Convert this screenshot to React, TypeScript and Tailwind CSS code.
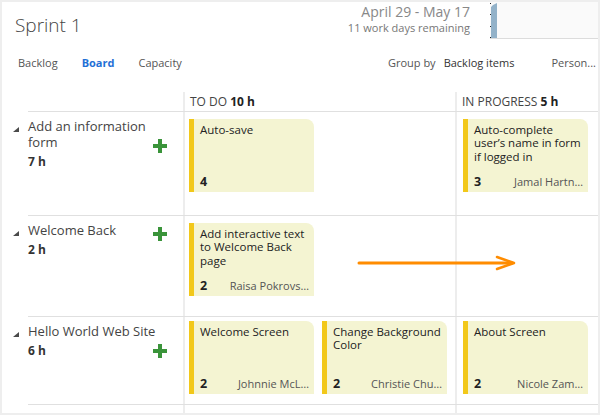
import React from "react";

type CardData = { title: string; n: string; name: string };

type RowData = {
  title: string;
  hours: string;
  height: string;
  cardTop: string;
  todo: CardData[];
  inProgress: CardData[];
};

const rows: RowData[] = [
  {
    title: "Add an information form",
    hours: "7 h",
    height: "h-[104px]",
    cardTop: "pt-[7px]",
    todo: [{ title: "Auto-save", n: "4", name: "" }],
    inProgress: [
      { title: "Auto-complete user’s name in form if logged in", n: "3", name: "Jamal Hartn…" },
    ],
  },
  {
    title: "Welcome Back",
    hours: "2 h",
    height: "h-[101px]",
    cardTop: "pt-[7px]",
    todo: [{ title: "Add interactive text to Welcome Back page", n: "2", name: "Raisa Pokrovs…" }],
    inProgress: [],
  },
  {
    title: "Hello World Web Site",
    hours: "6 h",
    height: "h-[88px]",
    cardTop: "pt-[4px]",
    todo: [
      { title: "Welcome Screen", n: "2", name: "Johnnie McL…" },
      { title: "Change Background Color", n: "2", name: "Christie Chu…" },
    ],
    inProgress: [{ title: "About Screen", n: "2", name: "Nicole Zam…" }],
  },
];

function Plus() {
  return (
    <svg width="14" height="14" viewBox="0 0 14 14" className="float-right mt-[5px]">
      <rect x="0" y="5" width="14" height="4" fill="#3a943a" />
      <rect x="5" y="0" width="4" height="14" fill="#3a943a" />
    </svg>
  );
}

function Triangle() {
  return (
    <svg width="6" height="5" viewBox="0 0 6 5">
      <polygon points="6,0 6,5 0,5" fill="#4a4a4a" />
    </svg>
  );
}

function Card({ card }: { card: CardData }) {
  return (
    <div className="flex w-[125px] h-[73px] shrink-0">
      <div className="w-[5px] bg-[#f2c81a]" />
      <div className="flex-1 flex flex-col bg-[#f4f4d2] rounded-tr-[8px] pl-[6px] pr-[5px] pt-[4px] pb-[3px]">
        <div className="text-[11.5px] leading-[13.3px] text-[#222]">{card.title}</div>
        <div className="mt-auto flex items-baseline justify-between">
          <span className="text-[12.5px] leading-[14px] font-bold text-[#222]">{card.n}</span>
          <span className="text-[11px] leading-[14px] text-[#555]">{card.name}</span>
        </div>
      </div>
    </div>
  );
}

function Burndown() {
  return (
    <div className="w-[108px] h-[37px] shrink-0 bg-[#fafafa] border-b border-[#dcdcdc]">
      <svg width="108" height="37" viewBox="0 0 108 37">
        <rect x="0" y="1" width="1" height="1" fill="#222" />
        <rect x="0" y="12" width="1" height="1" fill="#222" />
        <rect x="0" y="24" width="1" height="1" fill="#222" />
        <rect x="0" y="35" width="1" height="1" fill="#222" />
        <polygon points="1,5 3,3 7,1 7,36 1,36" fill="#93b2c9" />
      </svg>
    </div>
  );
}

export default function App() {
  return (
    <div className="relative w-[600px] h-[415px] overflow-hidden border-2 border-[#eeeeee] bg-white flex flex-col font-['Open_Sans','Noto_Sans',sans-serif] text-[#333]">
      {/* Header */}
      <div className="flex h-[38px] shrink-0">
        <div className="pl-[13px] pt-[11px] text-[19px] leading-[24px] font-light text-[#444]">Sprint 1</div>
        <div className="ml-auto mr-[20px] text-right">
          <div className="text-[14px] leading-[19px] text-[#888]">April 29 - May 17</div>
          <div className="text-[11px] leading-[15px] -mt-[1px] text-[#777]">11 work days remaining</div>
        </div>
        <Burndown />
      </div>

      {/* Tabs */}
      <div className="flex h-[52px] shrink-0 pt-[15px] text-[11px] leading-[16px] text-[#555]">
        <div className="flex gap-[24px] pl-[16px]">
          <span>Backlog</span>
          <span className="font-bold text-[#1f6fd6]">Board</span>
          <span>Capacity</span>
        </div>
        <div className="ml-auto flex pr-[2px]">
          <span>Group by</span>
          <span className="ml-[8px] text-[#333]">Backlog items</span>
          <span className="ml-[37px]">Person...</span>
        </div>
      </div>

      {/* Board */}
      <div className="flex-1 flex flex-col">
        <div className="flex h-[20px] shrink-0">
          <div className="w-[26px] shrink-0" />
          <div className="flex flex-1 border-b border-[#e0e0e0]">
            <div className="w-[155px] shrink-0" />
            <div className="w-[272px] shrink-0 border-l-2 border-[#ededed] pl-[5px] text-[12px] leading-[19px] text-[#444]">
              TO DO <span className="font-bold text-[#222]">10 h</span>
            </div>
            <div className="flex-1 border-l-2 border-[#ededed] pl-[5px] text-[12px] leading-[19px] text-[#444]">
              IN PROGRESS <span className="font-bold text-[#222]">5 h</span>
            </div>
          </div>
        </div>

        {rows.map((row) => (
          <div key={row.title} className={`flex shrink-0 ${row.height}`}>
            <div className="w-[26px] shrink-0 pl-[11px] pt-[15px]">
              <Triangle />
            </div>
            <div className="flex flex-1 border-b border-[#e0e0e0]">
              <div className="w-[155px] shrink-0 pt-[6px] pr-[16px]">
                <div className="text-[13px] leading-[16px] text-[#444]">
                  {row.title}
                  <Plus />
                </div>
                <div className="mt-[4px] text-[12px] leading-[16px] font-bold text-[#333]">{row.hours}</div>
              </div>
              <div className={`w-[272px] shrink-0 flex gap-[8px] border-l-2 border-[#ededed] pl-[4px] ${row.cardTop}`}>
                {row.todo.map((c) => (
                  <Card key={c.title} card={c} />
                ))}
              </div>
              <div className={`flex-1 flex border-l-2 border-[#ededed] pl-[6px] ${row.cardTop}`}>
                {row.inProgress.map((c) => (
                  <Card key={c.title} card={c} />
                ))}
              </div>
            </div>
          </div>
        ))}

        <div className="flex flex-1">
          <div className="w-[181px] shrink-0" />
          <div className="w-[272px] shrink-0 border-l-2 border-[#ededed]" />
          <div className="flex-1 border-l-2 border-[#ededed]" />
        </div>
      </div>

      {/* Annotation arrow */}
      <svg
        className="absolute left-[355px] top-[251px]"
        width="164"
        height="20"
        viewBox="0 0 164 20"
      >
        <line x1="2" y1="10" x2="155" y2="10" stroke="#ff8c00" strokeWidth="3" strokeLinecap="round" />
        <polyline
          points="140,4 157,10 140,16"
          fill="none"
          stroke="#ff8c00"
          strokeWidth="2.5"
          strokeLinejoin="round"
          strokeLinecap="round"
        />
      </svg>
    </div>
  );
}
